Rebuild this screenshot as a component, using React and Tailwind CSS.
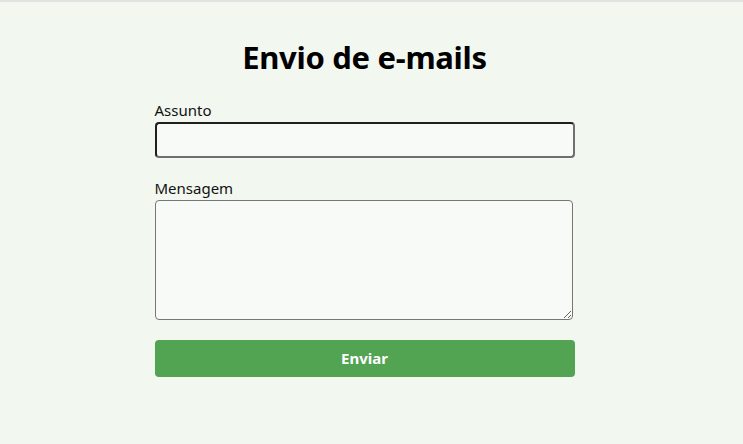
import React from 'react';

const App = () => {
  return (
    <div
      className="min-h-[444px] bg-[#f2f7f0] border-t-2 border-[#e2e2e2] flex justify-center pr-[14px]"
      style={{ fontFamily: '"Noto Sans", "Open Sans", sans-serif' }}
    >
      <div className="w-[420px] pt-[31px]">
        <h1 className="text-center text-[31px] font-bold text-black leading-[48px] tracking-[-0.3px]">
          Envio de e-mails
        </h1>

        <form className="mt-[19px]" onSubmit={(e) => e.preventDefault()}>
          <label className="block text-[15px] leading-[20px] text-[#111]">Assunto</label>
          <input
            type="text"
            className="mt-[2px] block w-full h-9 rounded-[4px] bg-[#f7faf6] border-2 border-t-[#1f1f1f] border-l-[#1f1f1f] border-r-[#6f6f6f] border-b-[#6f6f6f] outline-none"
          />

          <label className="block mt-[20px] text-[15px] leading-[20px] text-[#111]">Mensagem</label>
          <textarea
            className="mt-[2px] block w-[418px] h-[120px] rounded-[4px] bg-[#f7faf6] border border-[#767676] outline-none"
          />

          <button
            type="submit"
            className="mt-[20px] w-full h-[37px] rounded-[4px] bg-[#52a352] text-white font-bold text-[15px]"
          >
            Enviar
          </button>
        </form>
      </div>
    </div>
  );
};

export default App;
